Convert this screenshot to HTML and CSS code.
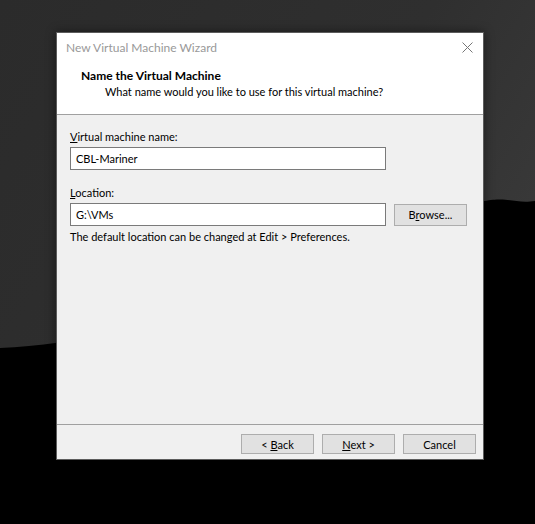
FILE: index.html
```html
<!DOCTYPE html>
<html>
<head>
    <meta charset="utf-8">
    <title>New Virtual Machine Wizard</title>
    <link rel="stylesheet" href="styles.css">
</head>
<body>
    <svg class="wallpaper" width="535" height="524" viewBox="0 0 535 524">
        <defs>
            <linearGradient id="sky" x1="0" y1="0" x2="1" y2="0.6">
                <stop offset="0" stop-color="#2b2b2b"/>
                <stop offset="0.6" stop-color="#2f2f2f"/>
                <stop offset="1" stop-color="#3b3b3b"/>
            </linearGradient>
        </defs>
        <rect width="535" height="524" fill="url(#sky)"/>
        <path d="M0 348 C 110 344, 250 300, 380 240 S 500 206, 535 201 V524 H0 Z" fill="#000"/>
    </svg>

    <div class="dialog">
        <div class="titlebar">
            <span class="title">New Virtual Machine Wizard</span>
            <svg class="close" width="11" height="11" viewBox="0 0 11 11">
                <path d="M0.5 0.5 L10.5 10.5 M10.5 0.5 L0.5 10.5" stroke="#767676" stroke-width="1"/>
            </svg>
        </div>

        <div class="header">
            <div class="heading">Name the Virtual Machine</div>
            <div class="subheading">What name would you like to use for this virtual machine?</div>
        </div>

        <div class="content">
            <div class="label"><u>V</u>irtual machine name:</div>
            <div class="row">
                <div class="textbox">CBL-Mariner</div>
            </div>

            <div class="label"><u>L</u>ocation:</div>
            <div class="row">
                <div class="textbox">G:\VMs</div>
                <button class="btn browse">B<u>r</u>owse...</button>
            </div>
            <div class="hint">The default location can be changed at Edit &gt; Preferences.</div>
        </div>

        <div class="footer">
            <button class="btn">&lt; <u>B</u>ack</button>
            <button class="btn"><u>N</u>ext &gt;</button>
            <button class="btn">Cancel</button>
        </div>
    </div>
</body>
</html>
```

FILE: styles.css
```css
body {
    margin: 0;
    padding: 32px 0 0 56px;
    width: 535px;
    height: 524px;
    box-sizing: border-box;
    overflow: hidden;
    background: #000;
    font-family: Lato, "Liberation Sans", sans-serif;
    font-size: 11px;
    color: #000;
}
.wallpaper {
    position: absolute;
    left: 0;
    top: 0;
    z-index: 0;
}
.dialog {
    position: relative;
    z-index: 1;
    width: 428px;
    height: 428px;
    box-sizing: border-box;
    border: 1px solid #5c5c5c;
    background: #f0f0f0;
    display: flex;
    flex-direction: column;
    box-shadow: 0 0 10px rgba(0, 0, 0, 0.45);
}
.titlebar {
    height: 28px;
    background: #fff;
    display: flex;
    align-items: center;
    justify-content: space-between;
    padding: 0 10px 2px 9px;
}
.title {
    color: #999;
    font-size: 12px;
}
.header {
    height: 52px;
    background: #fff;
    border-bottom: 1px solid #a0a0a0;
    padding: 5px 0 0 24px;
    box-sizing: border-box;
}
.heading {
    font-size: 12px;
    font-weight: bold;
    line-height: 16px;
}
.subheading {
    padding-left: 24px;
    line-height: 16px;
}
.content {
    flex: 1;
    padding: 14px 0 0 13px;
}
.label {
    line-height: 15px;
    margin-bottom: 3px;
}
.row {
    display: flex;
    gap: 8px;
    align-items: center;
    margin-bottom: 15px;
}
.textbox {
    width: 316px;
    height: 23px;
    box-sizing: border-box;
    border: 1px solid #7a7a7a;
    background: #fff;
    padding: 3px 5px;
    line-height: 15px;
}
.row:has(.browse) {
    margin-bottom: 3px;
}
.hint {
    line-height: 15px;
}
.btn {
    width: 73px;
    height: 20px;
    padding: 0;
    border: 1px solid #adadad;
    background: #e1e1e1;
    font-family: inherit;
    font-size: 11px;
    color: #000;
}
.browse {
    height: 22px;
}
.footer {
    border-top: 1px solid #a0a0a0;
    height: 35px;
    box-sizing: border-box;
    display: flex;
    justify-content: flex-end;
    align-items: flex-start;
    gap: 8px;
    padding: 9px 7px 0 0;
}
```
